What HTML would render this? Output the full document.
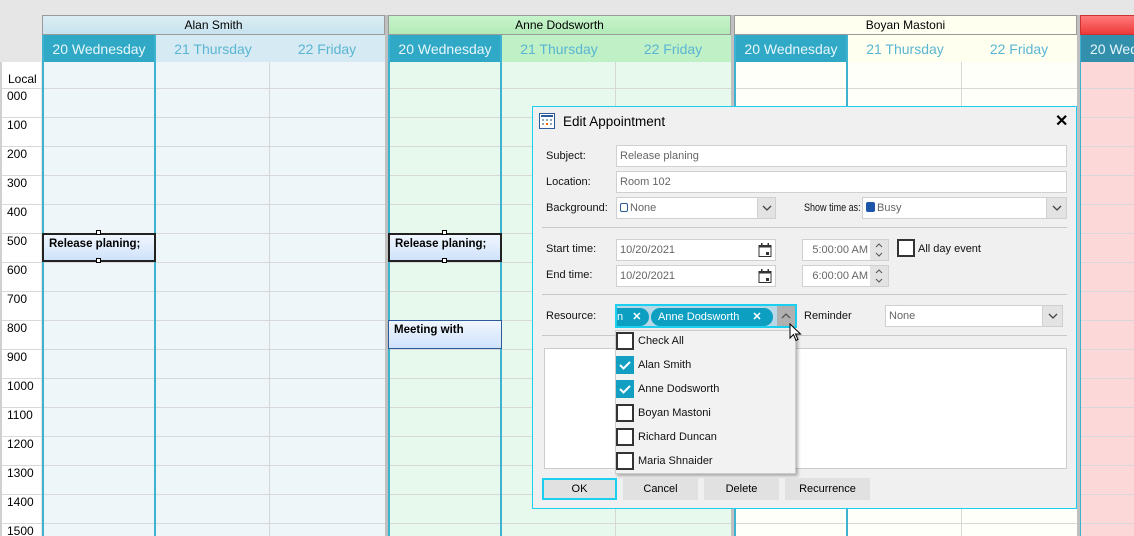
<!DOCTYPE html>
<html><head><meta charset="utf-8"><style>
*{box-sizing:border-box;margin:0;padding:0}
html,body{width:1134px;height:536px;overflow:hidden}
body{background:#e6e6e6;font-family:"Liberation Sans",sans-serif;font-size:12px;color:#000;position:relative}
.a{position:absolute}
.rows{background-image:repeating-linear-gradient(to bottom,transparent 0,transparent 26px,#d8d8d8 26px,#d8d8d8 27px,transparent 27px,transparent 29px)}
.grp{position:absolute;top:15px;height:521px;width:343px;overflow:hidden}
.gh{position:absolute;left:0;top:0;width:343px;height:20px;border:1px solid #9a9a9a;text-align:center;font-size:12px;line-height:18px}
.dh{position:absolute;top:20px;height:28px;width:114px;text-align:center;font-size:14px;line-height:28px;color:#5ab5d3}
.dh.on{background:#30a9c6;color:#e6f6fb}
.body{position:absolute;top:47px;left:0;width:343px;height:474px}
.vl{position:absolute;top:47px;height:474px;width:1px;background:#d6d6d6}
.bl{position:absolute;top:20px;height:501px;width:2px;background:#3fb2cf}
.tl{position:absolute;left:7px;font-size:12px}
.ev{position:absolute;width:114px;height:29px;background:linear-gradient(#f0f6fe,#cfe2fb);font-weight:bold;font-size:11.5px;padding:3px 0 0 5px}
.h{position:absolute;width:5px;height:5px;border:1px solid #000;background:#fff}
.in{position:absolute;background:#fff;border:1px solid #d0d0d0;color:#666;font-size:11px;padding-left:3px;line-height:20px}
.lb{position:absolute;font-size:11px;color:#111;white-space:nowrap}
.dd{position:absolute;right:0;top:0;width:18px;height:100%;background:#e3e3e3;border-left:1px solid #d0d0d0}
.sep{position:absolute;left:542px;width:525px;height:1px;background:#c8c8c8}
.cb{position:absolute;width:18px;height:18px;border:2px solid #333;background:#fff}
.cb.ck{background:#139fc1;border-color:#139fc1}
.btn{position:absolute;top:478px;height:22px;background:#e1e1e1;text-align:center;line-height:22px;font-size:11px}
</style></head><body>
<div class="a" style="left:0;top:62px;width:41px;height:474px;background:#fff"></div>
<div class="a" style="left:0;top:62px;width:2px;height:474px;background:#d0d0d0"></div>
<div class="a" style="left:8px;top:72px;font-size:12px">Local</div>
<div class="a rows" style="left:2px;top:62px;width:40px;height:474px"></div>
<div class="tl a" style="top:89px">000</div><div class="tl a" style="top:118px">100</div><div class="tl a" style="top:147px">200</div><div class="tl a" style="top:176px">300</div><div class="tl a" style="top:205px">400</div><div class="tl a" style="top:234px">500</div><div class="tl a" style="top:263px">600</div><div class="tl a" style="top:292px">700</div><div class="tl a" style="top:321px">800</div><div class="tl a" style="top:350px">900</div><div class="tl a" style="top:379px">1000</div><div class="tl a" style="top:408px">1100</div><div class="tl a" style="top:437px">1200</div><div class="tl a" style="top:466px">1300</div><div class="tl a" style="top:495px">1400</div><div class="tl a" style="top:524px">1500</div>

<div class="a" style="left:385px;top:15px;width:3px;height:521px;background:#c0c0c0"></div>
<div class="a" style="left:731px;top:15px;width:3px;height:521px;background:#c0c0c0"></div>
<div class="a" style="left:1077px;top:15px;width:3px;height:521px;background:#c0c0c0"></div>

<div class="grp" style="left:42px">
<div class="gh" style="background:linear-gradient(#dcedf4,#c6e3ee)">Alan Smith</div>
<div class="a" style="left:0;top:20px;width:343px;height:28px;background:#d5eaf2"></div>
<div class="dh on" style="left:0">20 Wednesday</div><div class="dh" style="left:114px">21 Thursday</div><div class="dh" style="left:228px">22 Friday</div>
<div class="body rows" style="background-color:#eef6fa"></div>
<div class="bl" style="left:0"></div><div class="bl" style="left:112px"></div><div class="vl" style="left:227px"></div>
</div>
<div class="grp" style="left:388px">
<div class="gh" style="background:linear-gradient(#c8f5cc,#b2eab8)">Anne Dodsworth</div>
<div class="a" style="left:0;top:20px;width:343px;height:28px;background:#c0f0c6"></div>
<div class="dh on" style="left:0">20 Wednesday</div><div class="dh" style="left:114px">21 Thursday</div><div class="dh" style="left:228px">22 Friday</div>
<div class="body rows" style="background-color:#e7f9ec"></div>
<div class="bl" style="left:0"></div><div class="bl" style="left:112px"></div><div class="vl" style="left:227px"></div>
</div>
<div class="grp" style="left:734px">
<div class="gh" style="background:#fffff0">Boyan Mastoni</div>
<div class="a" style="left:0;top:20px;width:343px;height:28px;background:#fffff0"></div>
<div class="dh on" style="left:0">20 Wednesday</div><div class="dh" style="left:114px">21 Thursday</div><div class="dh" style="left:228px">22 Friday</div>
<div class="body rows" style="background-color:#fffffa"></div>
<div class="bl" style="left:0"></div><div class="bl" style="left:112px"></div><div class="vl" style="left:227px"></div>
</div>
<div class="grp" style="left:1080px;width:54px">
<div class="gh" style="width:60px;background:linear-gradient(#ff7a7a,#ee3a3a);border-color:#c33"></div>
<div class="dh" style="left:0;background:#3390ac;color:#e6f6fb;width:60px;text-align:left;padding-left:10px;white-space:nowrap;overflow:hidden">20 Wednesday</div>
<div class="body rows" style="width:60px;background-color:#fdd8d8"></div>
<div class="bl" style="left:0;width:1px"></div>
</div>

<div class="ev" style="left:42px;top:233px;border:2px solid #222">Release planing;</div>
<div class="h" style="left:96px;top:230px"></div><div class="h" style="left:96px;top:258px"></div>
<div class="ev" style="left:388px;top:233px;border:2px solid #222">Release planing;</div>
<div class="h" style="left:442px;top:230px"></div><div class="h" style="left:442px;top:258px"></div>
<div class="ev" style="left:388px;top:320px;border:1px solid #2c5a9a">Meeting with</div>

<div class="a" style="left:532px;top:106px;width:545px;height:403px;background:#f0f0f0;border:1px solid #1ccfee"></div>
<svg class="a" style="left:539px;top:113px" width="16" height="16"><rect x="0.5" y="0.5" width="15" height="15" fill="#fff" stroke="#2a5a9a"/><rect x="2" y="2" width="12" height="2" fill="#2a5a9a"/><g fill="#8ab"><rect x="3" y="6" width="2" height="2"/><rect x="7" y="6" width="2" height="2"/><rect x="11" y="6" width="2" height="2"/><rect x="3" y="10" width="2" height="2"/><rect x="11" y="10" width="2" height="2"/></g><rect x="7" y="10" width="2" height="2" fill="#f60"/></svg>
<div class="a" style="left:563px;top:114px;font-size:13.5px">Edit Appointment</div>
<div class="a" style="left:1055px;top:111px;font-size:16px;font-weight:bold">✕</div>

<div class="lb" style="left:546px;top:150px">Subject:</div>
<div class="in" style="left:616px;top:145px;width:451px;height:22px">Release planing</div>
<div class="lb" style="left:546px;top:176px">Location:</div>
<div class="in" style="left:616px;top:171px;width:451px;height:22px">Room 102</div>
<div class="lb" style="left:546px;top:202px">Background:</div>
<div class="in" style="left:616px;top:197px;width:160px;height:22px"><span style="display:inline-block;width:8px;height:9px;border:1px solid #2a5a9a;border-radius:2px;vertical-align:-1px;margin-right:2px"></span>None<div class="dd"><svg width="18" height="20"><path d="M5 8l4 4 4-4" stroke="#444" fill="none" stroke-width="1.3"/></svg></div></div>
<div class="in" style="left:862px;top:197px;width:205px;height:22px"><span style="display:inline-block;width:9px;height:10px;background:#1d55a8;border-radius:2px;vertical-align:-1px;margin-right:2px"></span>Busy<div class="dd" style="width:20px"><svg width="20" height="20"><path d="M6 8l4 4 4-4" stroke="#444" fill="none" stroke-width="1.3"/></svg></div></div>
<div class="lb" style="left:804px;top:202px;transform:scaleX(0.82);transform-origin:0 0">Show time as:</div>
<div class="sep" style="top:227px"></div>

<div class="lb" style="left:546px;top:243px">Start time:</div>
<div class="in" style="left:616px;top:239px;width:160px;height:22px">10/20/2021<svg class="a" style="right:3px;top:3px" width="14" height="15"><rect x="1" y="2.5" width="12" height="11" fill="none" stroke="#333"/><rect x="1" y="2.5" width="12" height="2" fill="#333"/><rect x="3" y="0" width="1.5" height="3" fill="#333"/><rect x="9.5" y="0" width="1.5" height="3" fill="#333"/><rect x="8" y="9" width="3" height="3" fill="#333"/></svg></div>
<div class="in" style="left:802px;top:239px;width:87px;height:22px;text-align:right;padding-right:20px">5:00:00 AM<div class="dd" style="border:none"><svg width="18" height="20"><path d="M6 7l3-3 3 3M6 13l3 3 3-3" stroke="#555" fill="none"/></svg></div></div>
<div class="cb" style="left:897px;top:239px"></div>
<div class="lb" style="left:918px;top:243px">All day event</div>
<div class="lb" style="left:546px;top:269px">End time:</div>
<div class="in" style="left:616px;top:265px;width:160px;height:22px">10/20/2021<svg class="a" style="right:3px;top:3px" width="14" height="15"><rect x="1" y="2.5" width="12" height="11" fill="none" stroke="#333"/><rect x="1" y="2.5" width="12" height="2" fill="#333"/><rect x="3" y="0" width="1.5" height="3" fill="#333"/><rect x="9.5" y="0" width="1.5" height="3" fill="#333"/><rect x="8" y="9" width="3" height="3" fill="#333"/></svg></div>
<div class="in" style="left:802px;top:265px;width:87px;height:22px;text-align:right;padding-right:20px">6:00:00 AM<div class="dd" style="border:none"><svg width="18" height="20"><path d="M6 7l3-3 3 3M6 13l3 3 3-3" stroke="#555" fill="none"/></svg></div></div>
<div class="sep" style="top:294px"></div>

<div class="lb" style="left:546px;top:310px">Resource:</div>
<div class="a" style="left:615px;top:304px;width:182px;height:24px;border:2px solid #1ccfee;background:#b8d8e8;overflow:hidden">
 <div class="a" style="left:-20px;top:2px;width:52px;height:18px;background:#0c9fc1;border-radius:9px;color:#fff;font-size:11px;line-height:18px;padding-left:20px">n <b style="margin-left:6px">✕</b></div>
 <div class="a" style="left:34px;top:2px;width:122px;height:18px;background:#0c9fc1;border-radius:9px;color:#fff;font-size:11px;line-height:18px;padding-left:7px">Anne Dodsworth <b style="margin-left:10px">✕</b></div>
 <div class="a" style="left:160px;top:0;width:18px;height:20px;background:#b0b0b0"><svg width="18" height="20"><path d="M5 12l4-4 4 4" stroke="#555" fill="none" stroke-width="1.3"/></svg></div>
</div>
<div class="lb" style="left:804px;top:310px">Reminder</div>
<div class="in" style="left:885px;top:305px;width:178px;height:22px">None<div class="dd" style="width:20px"><svg width="20" height="20"><path d="M6 8l4 4 4-4" stroke="#444" fill="none" stroke-width="1.3"/></svg></div></div>
<div class="sep" style="top:335px"></div>

<div class="a" style="left:544px;top:348px;width:523px;height:121px;background:#fff;border:1px solid #ccc"></div>

<div class="a" style="left:615px;top:330px;width:181px;height:144px;background:#f2f2f2;border:1px solid #ccc;box-shadow:2px 2px 3px rgba(0,0,0,.3)"></div>
<div class="cb" style="left:616px;top:332px"></div><div class="lb" style="left:638px;top:335px">Check All</div>
<div class="cb ck" style="left:616px;top:356px"><svg width="14" height="14" style="position:absolute;left:0;top:0"><path d="M2 7l3.5 3.5L12 4" stroke="#fff" fill="none" stroke-width="2"/></svg></div><div class="lb" style="left:638px;top:359px">Alan Smith</div>
<div class="cb ck" style="left:616px;top:380px"><svg width="14" height="14" style="position:absolute;left:0;top:0"><path d="M2 7l3.5 3.5L12 4" stroke="#fff" fill="none" stroke-width="2"/></svg></div><div class="lb" style="left:638px;top:383px">Anne Dodsworth</div>
<div class="cb" style="left:616px;top:404px"></div><div class="lb" style="left:638px;top:407px">Boyan Mastoni</div>
<div class="cb" style="left:616px;top:428px"></div><div class="lb" style="left:638px;top:431px">Richard Duncan</div>
<div class="cb" style="left:616px;top:452px"></div><div class="lb" style="left:638px;top:455px">Maria Shnaider</div>

<svg class="a" style="left:789px;top:323px" width="14" height="20"><path d="M1 1v14l3.5-3.5 2.5 6 2-1-2.5-5.5h5z" fill="#fff" stroke="#000"/></svg>

<div class="btn" style="left:542px;width:75px;border:2px solid #1ccfee;line-height:18px">OK</div>
<div class="btn" style="left:623px;width:75px">Cancel</div>
<div class="btn" style="left:704px;width:75px">Delete</div>
<div class="btn" style="left:785px;width:85px">Recurrence</div>
</body></html>
